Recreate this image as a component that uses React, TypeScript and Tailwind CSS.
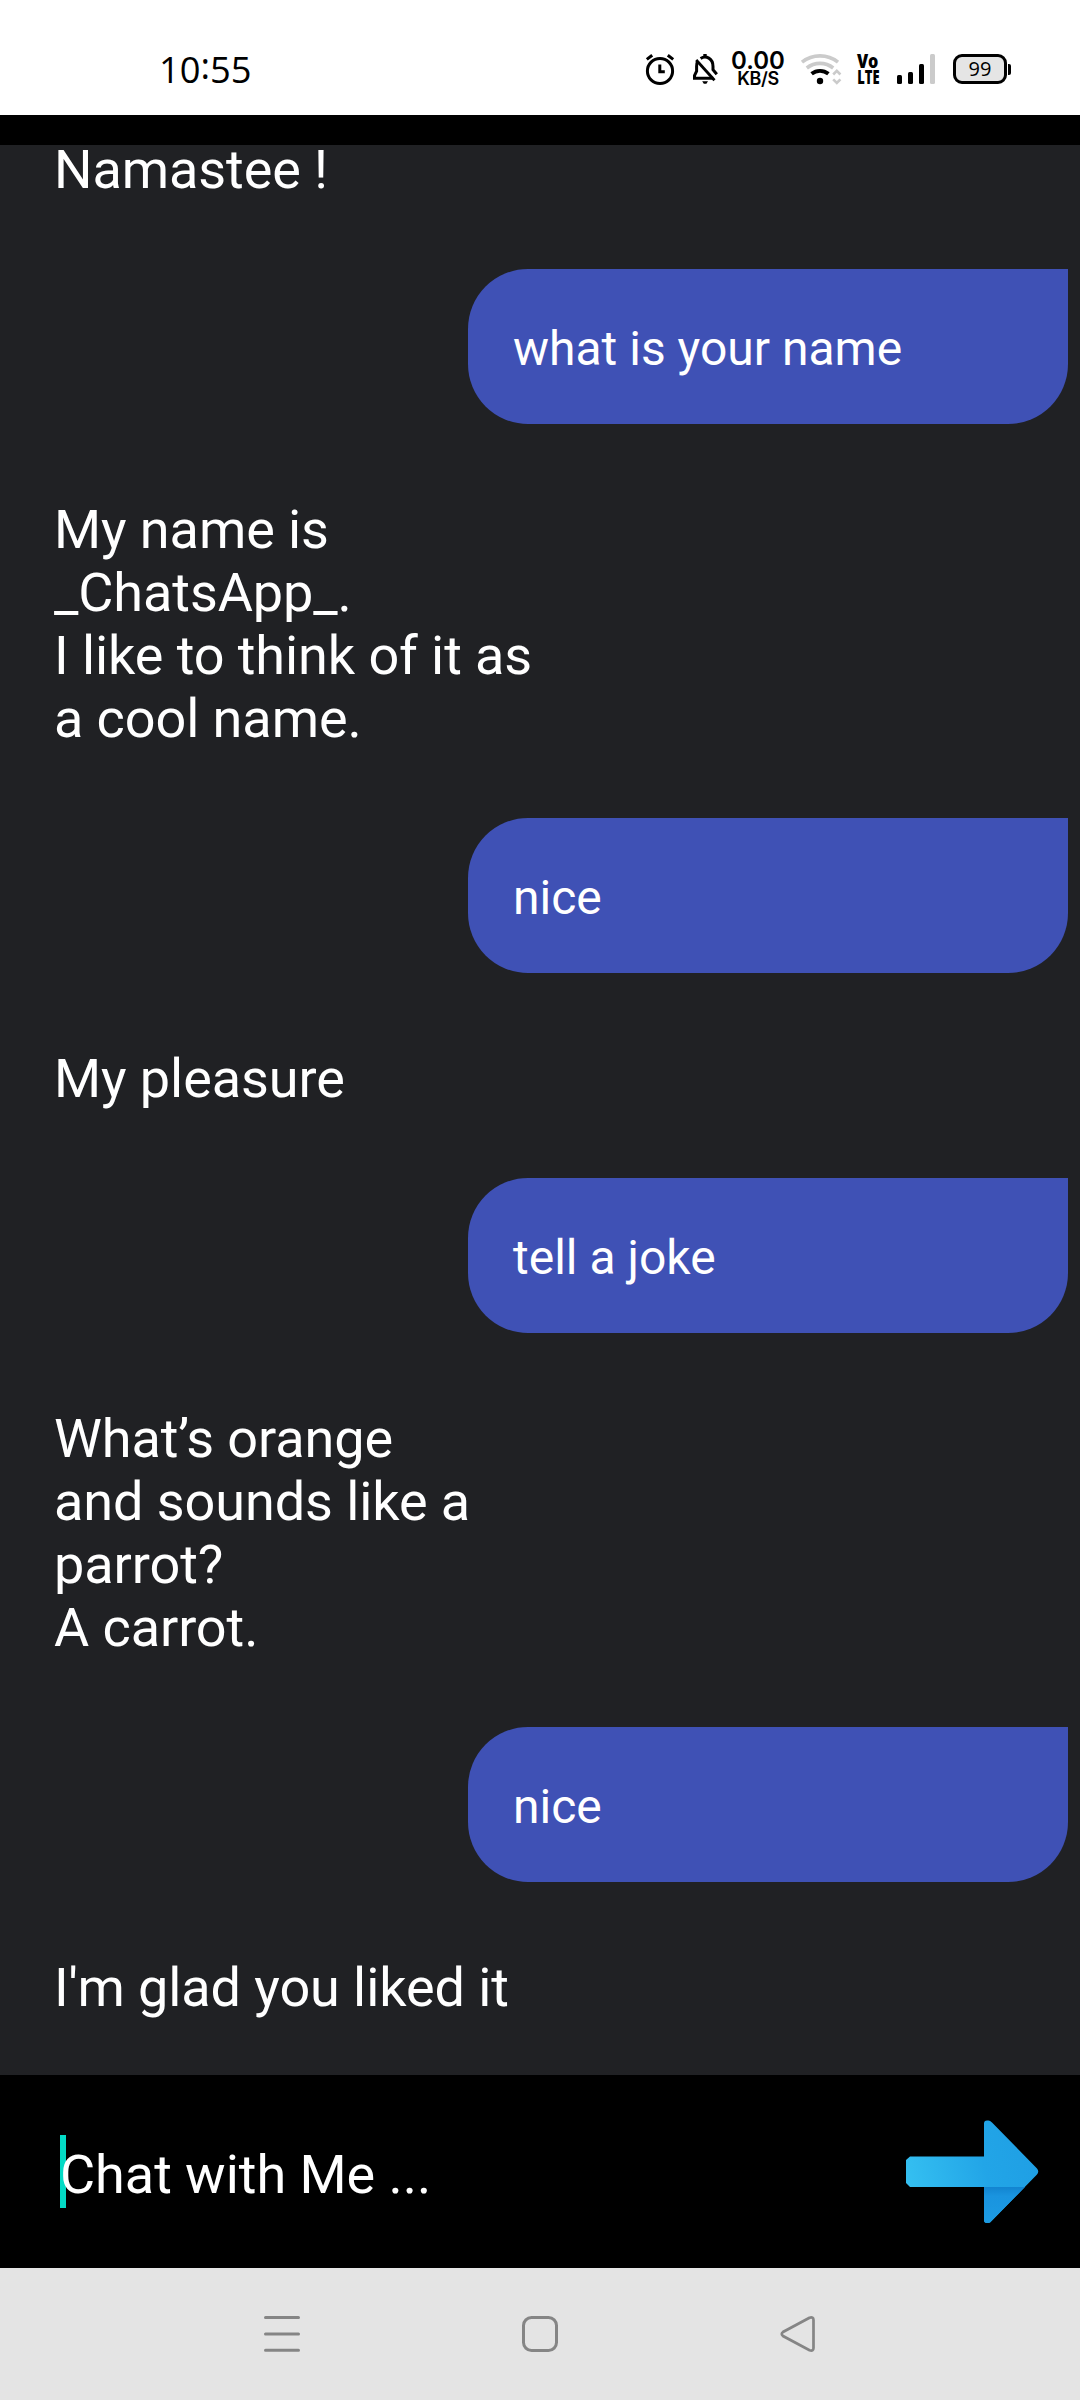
import React from "react";

type Message = { from: "bot" | "user"; lines: string[] };

const messages: Message[] = [
  { from: "bot", lines: ["Namastee !"] },
  { from: "user", lines: ["what is your name"] },
  { from: "bot", lines: ["My name is", "_ChatsApp_.", "I like to think of it as", "a cool name."] },
  { from: "user", lines: ["nice"] },
  { from: "bot", lines: ["My pleasure"] },
  { from: "user", lines: ["tell a joke"] },
  { from: "bot", lines: ["What’s orange", "and sounds like a", "parrot?", "A carrot."] },
  { from: "user", lines: ["nice"] },
  { from: "bot", lines: ["I'm glad you liked it"] },
];

function AlarmIcon() {
  return (
    <svg className="h-[34px] w-8" viewBox="0 0 32 34" fill="none" stroke="#000">
      <circle cx="16" cy="19" r="12.6" strokeWidth="3" />
      <path d="M2.8 7.4 8.2 3.2M29.2 7.4 23.8 3.2" strokeWidth="3" />
      <path d="M15.8 12.6v7.2h5" strokeWidth="3" />
    </svg>
  );
}

function BellOffIcon() {
  return (
    <svg className="h-[34px] w-7" viewBox="0 0 28 34" fill="none" stroke="#000" strokeWidth="3">
      <path d="M5.500 9.200C4.600 11 4.400 13 4.400 15v4.500L2.300 24v2.600H21" transform="translate(1.2 -.4)" />
      <path d="M9.600 6.400C15 2.900 22 6.500 22 14.500v3.300l3.800 4.500" />
      <path d="M14 2v3" strokeWidth="3.400" />
      <path d="M5.200 8 23.500 28.300" strokeWidth="2.800" />
      <path d="M11.200 29.200h5.800l-1.600 2.600h-2.600z" fill="#000" stroke="none" />
    </svg>
  );
}

function WifiIcon() {
  return (
    <svg className="h-[34px] w-[42px]" viewBox="0 0 42 34" fill="none">
      <path d="M2 10.200C12.500 1.800 27.500 1.800 38 10.200" stroke="#cbcbcb" strokeWidth="3.600" />
      <path d="M6.800 16C14.500 9.800 25.500 9.800 33.200 16" stroke="#cbcbcb" strokeWidth="3.600" />
      <path d="M11.600 21.800C16.500 17.800 23.500 17.800 28.400 21.800" stroke="#000" strokeWidth="3.800" />
      <circle cx="20" cy="29" r="3.200" fill="#000" />
      <path d="M33.200 22.500 36.800 18.800 40.400 22.500M33.200 27.300 36.800 31 40.400 27.300" stroke="#cbcbcb" strokeWidth="2.600" />
    </svg>
  );
}

function SignalIcon() {
  return (
    <svg className="h-[34px] w-10" viewBox="0 0 40 34">
      <rect x="1" y="23" width="5" height="9" rx="1.500" />
      <rect x="12" y="20" width="5" height="12" rx="1.500" />
      <rect x="23" y="12" width="5" height="20" rx="1.500" />
      <rect x="34" y="2" width="5" height="30" rx="1.500" fill="#cbcbcb" />
    </svg>
  );
}

function StatusBar() {
  return (
    <header className="flex h-[115px] items-start bg-white text-black">
      <div className="ml-[159px] mt-[44px] w-[485px] font-['Open_Sans'] text-[37px] leading-[50px]">
        <span className="inline-block origin-left scale-x-[0.98]">
          10<span className="relative -top-[4px]">:</span>55
        </span>
      </div>
      <div className="mt-[52px] flex h-[34px] items-center">
        <AlarmIcon />
        <div className="ml-[15px] flex">
          <BellOffIcon />
        </div>
        <div className="ml-[12px] flex w-[54px] flex-col items-center whitespace-nowrap pt-[1px] font-[Inter]">
          <span className="text-[24px] font-semibold leading-[19px]">0.00</span>
          <span className="text-[18px] font-semibold leading-[18px] tracking-[-0.4px]">KB/S</span>
        </div>
        <div className="ml-[15px] flex">
          <WifiIcon />
        </div>
        <div className="ml-[14px] flex w-6 flex-col items-center font-['Open_Sans'] text-[19px] font-extrabold leading-[16px]">
          <span className="scale-x-[0.85]">Vo</span>
          <span className="scale-x-[0.68]">LTE</span>
        </div>
        <div className="ml-[16px] flex">
          <SignalIcon />
        </div>
        <div className="ml-[17px] flex items-center">
          <div className="flex h-[30px] w-[54px] items-center justify-center rounded-[9px] border-[3px] border-black bg-[#e5e5e5] font-['Open_Sans'] text-[20px] leading-none">
            99
          </div>
          <div className="ml-[1px] h-[11px] w-[3px] rounded-r-[2px] bg-black" />
        </div>
      </div>
    </header>
  );
}

function BotMessage({ lines }: { lines: string[] }) {
  return (
    <div className="mb-[68px] pl-[54px] text-[54px] leading-[63px] tracking-[-0.08px]">
      {lines.map((line) => (
        <p key={line}>{line}</p>
      ))}
    </div>
  );
}

function UserMessage({ lines }: { lines: string[] }) {
  return (
    <div className="mb-[74px] mr-3 flex h-[155px] w-[600px] items-center self-end rounded-[60px] rounded-tr-none bg-[#3f51b5] pl-[45px] pt-[4px] text-[48px] leading-[56px]">
      {lines[0]}
    </div>
  );
}

function Composer() {
  return (
    <div className="flex h-[193px] items-center justify-between bg-black pl-[60px] pr-[40px]">
      <div className="relative pt-[5px] text-[54px] leading-[63px] tracking-[-0.04px]">
        <span className="absolute -top-[3px] left-0 h-[73px] w-[6px] bg-[#03dac5]" />
        <span className="relative">Chat with Me ...</span>
      </div>
      <svg className="h-[106px] w-[136px]" viewBox="0 0 136 106">
        <defs>
          <linearGradient id="arrow" x1="0" y1="0.600" x2="1" y2="0.400">
            <stop offset="0" stopColor="#35c0f1" />
            <stop offset="0.600" stopColor="#22a5e7" />
            <stop offset="1" stopColor="#1f9fe4" />
          </linearGradient>
          <linearGradient id="shade" x1="0" y1="0" x2="0" y2="1">
            <stop offset="0" stopColor="#1284d0" />
            <stop offset="0.250" stopColor="#1a94df" />
            <stop offset="1" stopColor="#1c9be3" />
          </linearGradient>
        </defs>
        <path
          d="M6 37.500H80V4.500Q80 1.500 83 1.500H84.500Q86 1.500 88 3.500L133 49.500Q135.500 52.500 133 55.500L88 101.500Q86 104 84 104H83Q80 104 80 101V68H6L2 64V41Z"
          fill="url(#arrow)"
        />
        <path d="M80 68H121L88 101.500Q86 104 84 104H83Q80 104 80 101Z" fill="url(#shade)" />
      </svg>
    </div>
  );
}

function NavBar() {
  return (
    <nav className="flex h-[132px] items-center justify-between bg-[#e4e4e4] pl-[263px] pr-[264px]">
      <svg className="h-[38px] w-[38px]" viewBox="0 0 38 38" stroke="#858585" strokeWidth="3" strokeLinecap="round">
        <path d="M2.500 2.500h33M2.500 19h33M2.500 35.300h33" />
      </svg>
      <svg className="h-[38px] w-[38px]" viewBox="0 0 38 38" fill="none" stroke="#858585" strokeWidth="3">
        <rect x="2.500" y="2.500" width="33" height="33" rx="8" />
      </svg>
      <svg className="h-[38px] w-[38px]" viewBox="-1 0 38 38" fill="none" stroke="#858585" strokeWidth="2.700">
        <path d="M30.500 2.800 4 17Q1.500 19 4 21L30.500 35.200Q34.500 36.500 34.500 33V5Q34.500 1.500 30.500 2.800Z" />
      </svg>
    </nav>
  );
}

export default function App() {
  return (
    <div className="flex h-[2400px] w-[1080px] flex-col overflow-hidden bg-black font-[Roboto,sans-serif] text-white">
      <StatusBar />
      <main className="mt-[30px] h-[1930px] overflow-hidden bg-[#202124]">
        <div className="-mt-[7px] flex flex-col">
          {messages.map((message, index) =>
            message.from === "bot" ? (
              <BotMessage key={index} lines={message.lines} />
            ) : (
              <UserMessage key={index} lines={message.lines} />
            ),
          )}
        </div>
      </main>
      <Composer />
      <NavBar />
    </div>
  );
}
